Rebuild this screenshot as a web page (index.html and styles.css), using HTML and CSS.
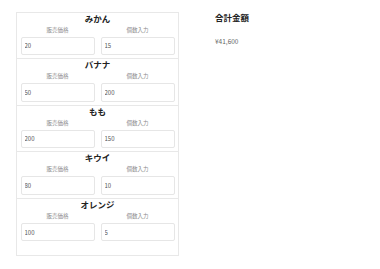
FILE: index.html
```html
<html>
<head>
    <title>合計金額</title>
    <link rel="stylesheet" href="styles.css">
</head>
<body>
    <div id="container">
        <div id="items">
            <div class="item">
                <p class="name">みかん</p>
                <div class="fields">
                    <div class="field"><label>販売価格</label><input type="text" value="20"></div>
                    <div class="field"><label>個数入力</label><input type="text" value="15"></div>
                </div>
            </div>
            <div class="item">
                <p class="name">バナナ</p>
                <div class="fields">
                    <div class="field"><label>販売価格</label><input type="text" value="50"></div>
                    <div class="field"><label>個数入力</label><input type="text" value="200"></div>
                </div>
            </div>
            <div class="item">
                <p class="name">もも</p>
                <div class="fields">
                    <div class="field"><label>販売価格</label><input type="text" value="200"></div>
                    <div class="field"><label>個数入力</label><input type="text" value="150"></div>
                </div>
            </div>
            <div class="item">
                <p class="name">キウイ</p>
                <div class="fields">
                    <div class="field"><label>販売価格</label><input type="text" value="80"></div>
                    <div class="field"><label>個数入力</label><input type="text" value="10"></div>
                </div>
            </div>
            <div class="item">
                <p class="name">オレンジ</p>
                <div class="fields">
                    <div class="field"><label>販売価格</label><input type="text" value="100"></div>
                    <div class="field"><label>個数入力</label><input type="text" value="5"></div>
                </div>
            </div>
        </div>
        <div id="total">
            <p id="totaltitle">合計金額</p>
            <p id="totalvalue">¥41,600</p>
        </div>
    </div>
</body>
</html>
```

FILE: styles.css
```css
body {
    margin: 0;
    background-color: #fff;
    color: #222;
    font-family: "Noto Sans CJK JP", "Noto Sans", sans-serif;
}

#container {
    display: flex;
    align-items: flex-start;
    padding: 11.5px 0 0 16px;
    gap: 36px;
}

#items {
    width: 161px;
    border: 1px solid #e8e8e8;
    padding-bottom: 11px;
}

.item {
    padding: 0 3.5px 3px;
    border-bottom: 1px solid #e8e8e8;
}

.item:last-child {
    border-bottom: none;
}

.name {
    margin: 0;
    font-size: 8.5px;
    font-weight: bold;
    line-height: 11px;
    text-align: center;
}

.fields {
    display: flex;
    gap: 6px;
    margin-top: 2px;
}

.field {
    flex: 1;
    display: flex;
    flex-direction: column;
}

.field label {
    font-size: 5.5px;
    line-height: 8px;
    color: #8a8a8a;
    text-align: center;
    margin-bottom: 3px;
}

.field input {
    height: 18.6px;
    width: 100%;
    box-sizing: border-box;
    margin: 0;
    padding: 0 3px;
    border: 1px solid #e6e6e6;
    border-radius: 2px;
    font-family: inherit;
    font-size: 6px;
    color: #555;
    outline: none;
}

#total p {
    margin: 0;
}

#totaltitle {
    font-size: 8.5px;
    font-weight: bold;
    line-height: 11px;
}

#totalvalue {
    margin-top: 14px !important;
    font-size: 6.5px;
    line-height: 9px;
    color: #666;
}
```
